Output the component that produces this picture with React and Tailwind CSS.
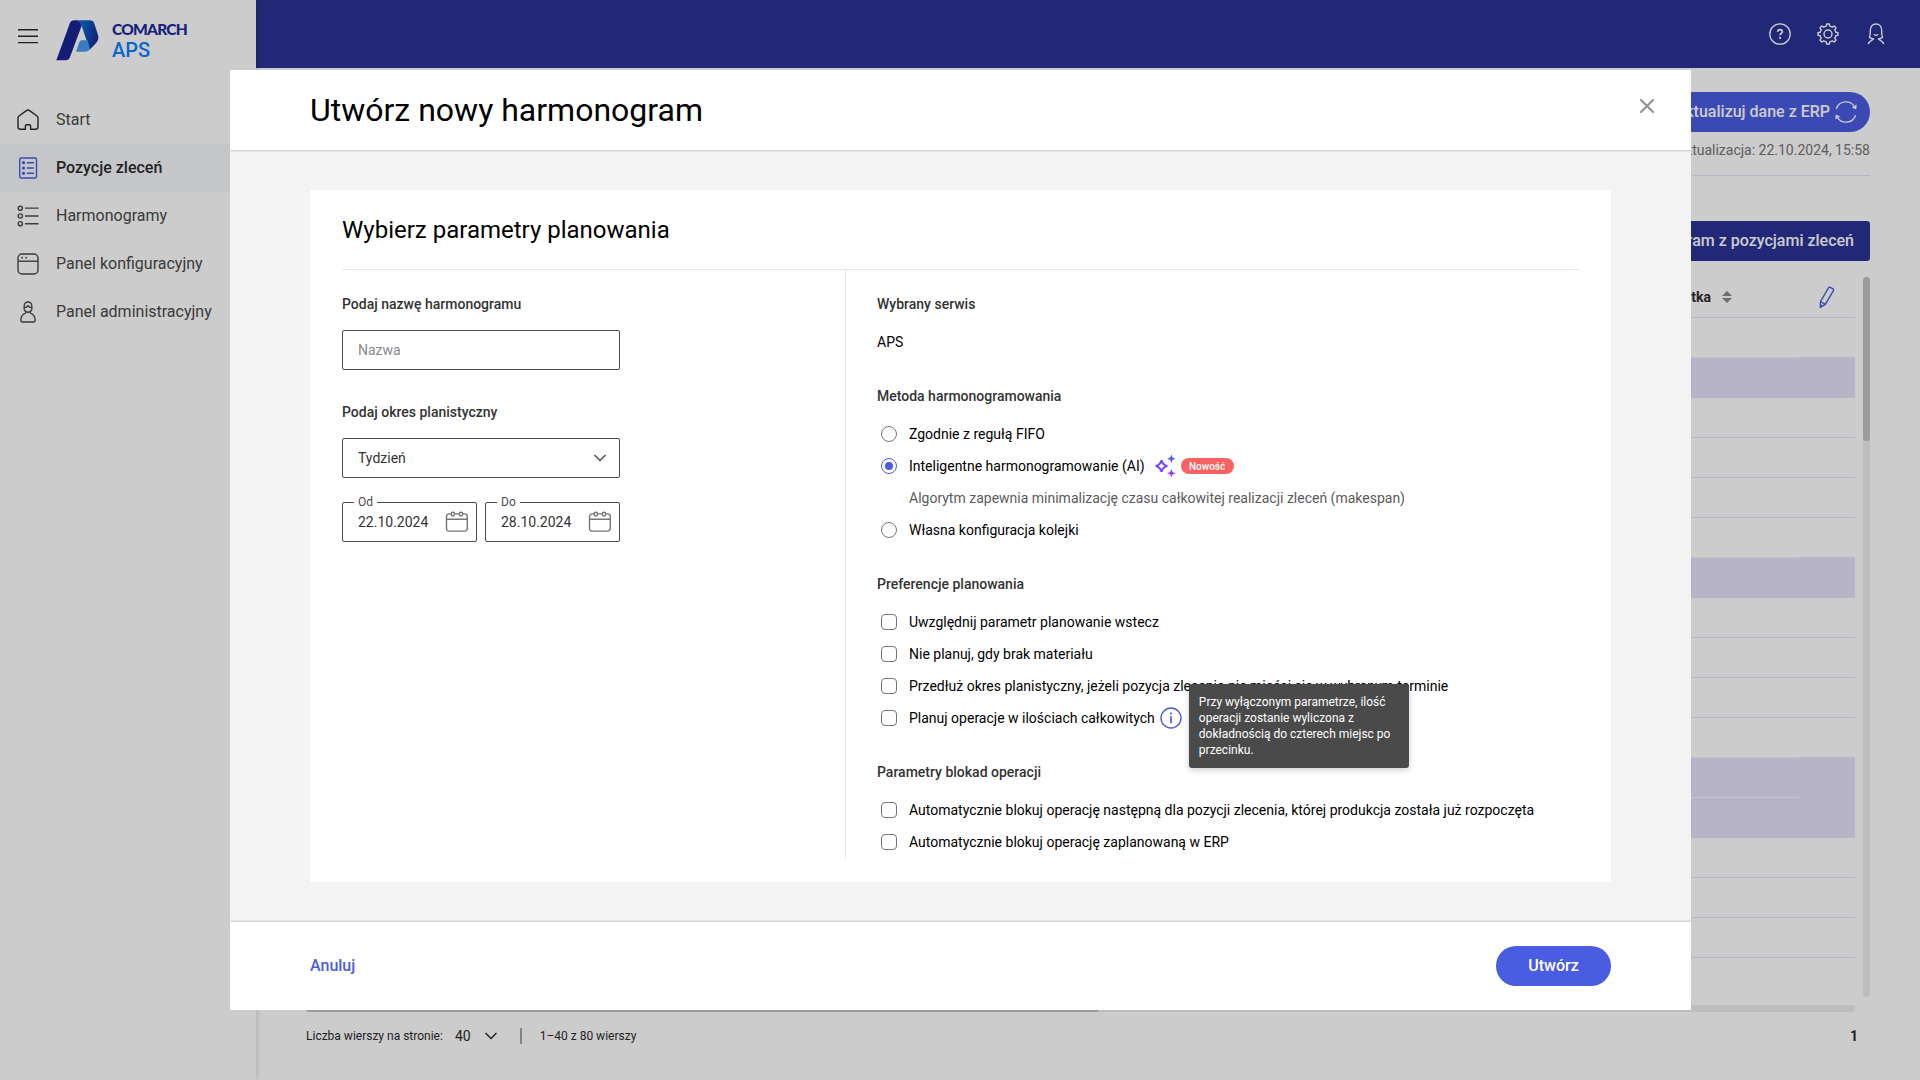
import React, { useState } from 'react';

const HomeIcon = () => (
  <svg width="24" height="24" viewBox="0 0 24 24" fill="none" stroke="#2b2b2b" strokeWidth="1.4" strokeLinejoin="round">
    <path d="M9.4 21.3H4.6A2.6 2.6 0 0 1 2 18.7V10a2.6 2.6 0 0 1 1-2l7.4-5.4a2.7 2.7 0 0 1 3.2 0L21 8a2.6 2.6 0 0 1 1 2v8.7a2.6 2.6 0 0 1-2.6 2.6h-4.8v-3.6a1 1 0 0 0-1-1h-3.2a1 1 0 0 0-1 1z" />
  </svg>
);

const OrdersIcon = () => (
  <svg width="24" height="24" viewBox="0 0 24 24" fill="none" stroke="#4a5ce2" strokeWidth="1.4">
    <rect x="3.7" y="2" width="16.8" height="20" rx="1.6" />
    <path d="M10.8 6.7H18M10.8 12H18M10.8 17.3H18" />
    <g fill="#4a5ce2" stroke="none">
      <circle cx="7.5" cy="6.7" r="1.6" />
      <circle cx="7.5" cy="12" r="1.6" />
      <circle cx="7.5" cy="17.3" r="1.6" />
    </g>
  </svg>
);

const ListIcon = () => (
  <svg width="24" height="24" viewBox="0 0 24 24" fill="none" stroke="#4a4a4a" strokeWidth="1.4">
    <circle cx="4.3" cy="4.3" r="2.1" />
    <circle cx="4.3" cy="12" r="2.1" />
    <circle cx="4.3" cy="19.7" r="2.1" />
    <path d="M9 4.1h13.5M9 12h13.5M9 19.8h13.5" />
  </svg>
);

const PanelIcon = () => (
  <svg width="24" height="24" viewBox="0 0 24 24" fill="none" stroke="#4a4a4a" strokeWidth="1.4">
    <rect x="2" y="2" width="20" height="20" rx="4" />
    <path d="M2 9.2h20" />
    <g fill="#4a4a4a" stroke="none">
      <circle cx="6.1" cy="5.7" r="0.9" />
      <circle cx="10.2" cy="5.7" r="0.9" />
    </g>
  </svg>
);

const AdminIcon = () => (
  <svg width="24" height="24" viewBox="0 0 24 24" fill="none" stroke="#4a4a4a" strokeWidth="1.4" strokeLinejoin="round">
    <path d="M8.2 9.4V5.8a3.8 3.8 0 0 1 7.6 0v3.6c0 .9-.7 1.4-1.5 2-1.3 1-3.3 1-4.6 0-.8-.6-1.5-1.1-1.5-2z" />
    <path d="M8.4 7.6c2.3 0 3-.8 3.6-2 .6 1.2 1.3 2 3.6 2" />
    <path d="M9.8 11.8v1.1c-3 1.1-4.6 3.3-4.9 6.8-.1 1.5.3 2.3 1.6 2.3h11c1.3 0 1.7-.8 1.6-2.3-.3-3.5-1.9-5.7-4.9-6.8v-1.1" />
  </svg>
);

const Logo = () => (
  <svg width="43" height="41" viewBox="169 59 129 123">
    <defs>
      <linearGradient id="logoRight" x1="0" y1="0" x2="1" y2="0.35">
        <stop offset="0.1" stopColor="#0a7be8" />
        <stop offset="0.5" stopColor="#0a5cc0" />
        <stop offset="1" stopColor="#16309a" />
      </linearGradient>
    </defs>
    <path d="M222 60h47q12 0 15 10l11 34q4 14-5 23l-20 21-24-72q-6-14-24-16z" fill="url(#logoRight)" />
    <path d="M170 180l40-110q4-10 14-10 16 0 22 16l-35 94q-4 10-13 10z" fill="#192593" />
    <path d="M229 154l10-29q2-5 7-5h18l7 27q-6 7-13 7z" fill="#4a9cf0" />
  </svg>
);

const HelpIcon = () => (
  <svg width="24" height="24" viewBox="0 0 24 24" fill="none" stroke="#fff" strokeWidth="1.3">
    <circle cx="12" cy="12" r="10.2" />
    <path d="M9.7 9.8c0-1.4 1-2.1 2.3-2.1s2.3.8 2.3 2c0 1.7-2.2 1.7-2.2 3.5" strokeWidth="1.8" />
    <circle cx="12.1" cy="15.9" r="1.1" fill="#fff" stroke="none" />
  </svg>
);

const GearIcon = () => (
  <svg width="24" height="24" viewBox="0 0 24 24" fill="none" stroke="#fff" strokeWidth="1.4" strokeLinejoin="round">
    <circle cx="12" cy="12" r="4" />
    <path d="M10.2 4.2 10.7 2h2.6l.5 2.2 2.5 1 1.9-1.2 1.8 1.8-1.2 1.9 1 2.5 2.2.5v2.6l-2.2.5-1 2.5 1.2 1.9-1.8 1.8-1.9-1.2-2.5 1-.5 2.2h-2.6l-.5-2.2-2.5-1-1.9 1.2L4 18.2l1.2-1.9-1-2.5-2.2-.5v-2.6l2.2-.5 1-2.5L4 5.8 5.8 4l1.9 1.2z" />
  </svg>
);

const UserIcon = () => (
  <svg width="24" height="24" viewBox="0 0 24 24" fill="none" stroke="#fff" strokeWidth="1.4" strokeLinejoin="round">
    <path d="M4.3 22c.4-1.6 1.8-2.6 3.6-3.8l1.7-1.2c-2.4-.5-3.9-1.2-4.2-2 1.2-1.600.9-3.500.9-6.700 0-3.800 2.400-6.300 5.700-6.300s5.700 2.500 5.700 6.300c0 3.200-.3 5.100.9 6.700-.3.8-1.800 1.500-4.200 2l1.700 1.200c1.800 1.200 3.200 2.200 3.600 3.800" />
    <path d="M9.9 12.2c.6 1.3 3.6 1.3 4.2 0" />
  </svg>
);

const RefreshIcon = () => (
  <svg width="24" height="24" viewBox="0 0 24 24" fill="none" stroke="#fff" strokeWidth="1.4">
    <path d="M2.4 8.700A10 10 0 0 1 20.800 7.300M21.600 15.300A10 10 0 0 1 3.200 16.700" />
    <path d="M17.800 7.600l4.400 1.800.5-4.800zM6.200 16.400l-4.400-1.800-.5 4.800z" fill="#fff" stroke="none" />
  </svg>
);

const PencilIcon = () => (
  <svg width="24" height="24" viewBox="0 0 24 24" fill="none" stroke="#4a5ce2" strokeWidth="1.4" strokeLinejoin="round">
    <path d="M5.3 22.3l.2-5.8L13.5 2.800a1.300 1.300 0 0 1 1.800-.4l2.700 1.500a1.300 1.300 0 0 1 .4 1.800l-8.100 13.700z" />
    <path d="M5.5 16.500l4.800 2.900M5.400 19.800l1.900 1.200" />
  </svg>
);

const CalendarIcon = () => (
  <svg width="24" height="24" viewBox="0 0 24 24" fill="none" stroke="#757575" strokeWidth="1.4">
    <path d="M6.2 3.9H4a2.5 2.5 0 0 0-2.5 2.5v12.2A2.5 2.5 0 0 0 4 21.100h15.800a2.500 2.500 0 0 0 2.500-2.500V6.400a2.500 2.500 0 0 0-2.500-2.500h-2.200M9.400 3.900h5M1.500 9.200h20.800" />
    <rect x="6.2" y="2.2" width="3.2" height="3.8" rx="1.4" />
    <rect x="14.4" y="2.2" width="3.2" height="3.8" rx="1.4" />
  </svg>
);

const Chevron = ({ color }) => (
  <svg width="12" height="8" viewBox="0 0 12 8" fill="none" stroke={color} strokeWidth="1.5">
    <path d="M0.5 1l5.5 5.5L11.5 1" />
  </svg>
);

const SparkleIcon = () => (
  <svg width="24" height="24" viewBox="0 0 24 24">
    <defs>
      <linearGradient id="sparkle" x1="0" y1="0" x2="0" y2="24" gradientUnits="userSpaceOnUse">
        <stop offset="0.1" stopColor="#4a5ce2" />
        <stop offset="0.9" stopColor="#a033ff" />
      </linearGradient>
    </defs>
    <path d="M8.5 6.200c.8 3.700 2.100 5 5.800 5.800-3.700.8-5 2.100-5.800 5.800-.8-3.700-2.100-5-5.800-5.800 3.700-.8 5-2.100 5.800-5.800z" fill="none" stroke="url(#sparkle)" strokeWidth="2" />
    <path d="M18.400 1c.5 2.500 1.200 3.200 3.700 3.700-2.500.5-3.200 1.200-3.700 3.700-.5-2.500-1.200-3.200-3.700-3.700 2.500-.5 3.200-1.200 3.700-3.700zM18.400 15.600c.5 2.500 1.200 3.200 3.700 3.700-2.500.5-3.200 1.200-3.700 3.700-.5-2.500-1.200-3.200-3.700-3.700 2.500-.5 3.200-1.200 3.700-3.700z" fill="url(#sparkle)" stroke="url(#sparkle)" strokeWidth="0.5" />
  </svg>
);

const InfoIcon = () => (
  <svg width="24" height="24" viewBox="0 0 24 24" fill="none" stroke="#4a5ce2" strokeWidth="1.4">
    <circle cx="12" cy="12" r="10" />
    <path d="M12 10.2v7" strokeWidth="1.7" />
    <circle cx="12" cy="7.500" r="1.1" fill="#4a5ce2" stroke="none" />
  </svg>
);

const menu = [
  { label: 'Start', Icon: HomeIcon },
  { label: 'Pozycje zleceń', Icon: OrdersIcon, active: true },
  { label: 'Harmonogramy', Icon: ListIcon },
  { label: 'Panel konfiguracyjny', Icon: PanelIcon },
  { label: 'Panel administracyjny', Icon: AdminIcon },
];

// Rows of the order table, true = highlighted
const rows = [false, true, false, false, false, false, true, false, false, false, false, true, true, false, false, false, false];

const Sidebar = () => (
  <aside className="relative z-10 flex w-64 shrink-0 flex-col bg-white shadow-[0_0_6px_rgba(0,0,0,0.2)]">
    <div className="flex h-24 items-start pl-[18px] pt-5">
      <svg className="mt-[9px]" width="20" height="15" viewBox="0 0 20 15" stroke="#2b2b2b" strokeWidth="1.4">
        <path d="M0 .8h20M0 7.2h20M0 13.6h20" />
      </svg>
      <div className="ml-[18px]">
        <Logo />
      </div>
      <div className="ml-[13px] mt-px flex flex-col">
        <span className="font-[Lato,sans-serif] text-[15.5px] leading-[16px] font-black tracking-[-0.75px] text-[#1b2a9c]">COMARCH</span>
        <span className="mt-0.5 text-xl leading-[22px] font-medium text-[#0b80ff]">APS</span>
      </div>
    </div>
    <nav>
      {menu.map(({ label, Icon, active }) => (
        <div key={label} className={`flex h-12 items-center gap-4 pl-4 ${active ? 'bg-[#f7f8fb] font-medium text-[#2b2b2b]' : 'text-[#4a4a4a]'}`}>
          <Icon />
          <span className="text-base">{label}</span>
        </div>
      ))}
    </nav>
  </aside>
);

const TableRow = ({ marked, joined }) => (
  <div className="flex h-10">
    <div className={`flex-1 border-b ${marked ? 'bg-[#e5e2fa]' : ''} ${joined ? 'border-[#f5f4fd]' : 'border-[#e5e2fa]'}`} />
    <div className={`w-14 border-b border-[#e5e2fa] ${marked ? 'bg-[#e5e2fa]' : ''}`} />
  </div>
);

const OrdersPage = () => (
  <main className="flex flex-1 flex-col">
    <header className="flex h-[68px] items-center justify-end gap-6 bg-[#293395] pr-8">
      <HelpIcon />
      <GearIcon />
      <UserIcon />
    </header>
    <div className="flex flex-1 flex-col pl-[50px] pr-[50px] pt-6">
      <div className="flex flex-col items-end border-b border-[#e5e2fa] pb-[15px]">
        <button className="flex h-10 items-center gap-1 rounded-full bg-[#4a5ce2] pl-6 pr-3 text-base font-medium text-white">
          Zaktualizuj dane z ERP
          <RefreshIcon />
        </button>
        <span className="mt-2 text-sm leading-5 text-[#757575]">Ostatnia aktualizacja: 22.10.2024, 15:58</span>
      </div>
      <button className="mt-[45px] h-10 self-end rounded-[3px] bg-[#293395] px-4 text-base font-medium text-white">
        Utwórz harmonogram z pozycjami zleceń
      </button>
      <div className="mt-4 flex h-[720px] justify-between">
        <div className="w-[1549px]">
          <div className="flex h-[41px] items-center justify-end border-b border-[#e5e2fa] pr-4">
            <span className="text-sm font-bold text-[#2b2b2b]">Jednostka</span>
            <svg className="ml-[11px]" width="10" height="12" viewBox="0 0 10 12" fill="#8a8a8a">
              <path d="M0 5l5-5 5 5zM0 7l5 5 5-5z" />
            </svg>
            <span className="ml-[83px]">
              <PencilIcon />
            </span>
          </div>
          {rows.slice(0, 16).map((marked, i) => (
            <TableRow key={i} marked={marked} joined={rows[i + 1]} />
          ))}
        </div>
        <div className="w-[7px] rounded-full bg-[#ededed]">
          <div className="h-[164px] rounded-full bg-[#c2c2c2]" />
        </div>
      </div>
      <div className="mt-2 h-[7px] w-[1549px] rounded-full bg-[#ededed]">
        <div className="h-full w-[793px] rounded-full bg-[#c2c2c2]" />
      </div>
      <div className="mt-3 flex h-6 items-center pr-3 text-xs text-[#2b2b2b]">
        <span>Liczba wierszy na stronie:</span>
        <span className="ml-3 mr-[14px] text-sm">40</span>
        <Chevron color="#2b2b2b" />
        <span className="ml-[23px] mr-[18px] h-4 w-0.5 bg-[#a5a5a5]" />
        <span>1–40 z 80 wierszy</span>
        <span className="ml-auto text-sm font-bold">1</span>
      </div>
    </div>
  </main>
);

const SectionTitle = ({ children }) => (
  <h3 className="flex h-6 items-center text-sm font-medium text-[#333]">{children}</h3>
);

const Radio = ({ label, checked, onChange, children }) => (
  <div className="flex h-8 items-center pl-1">
    <button
      onClick={onChange}
      className={`flex h-4 w-4 items-center justify-center rounded-full border ${checked ? 'border-[#4a5ce2]' : 'border-[#757575]'}`}
    >
      {checked && <span className="h-2 w-2 rounded-full bg-[#4a5ce2]" />}
    </button>
    <span className="ml-3 text-sm whitespace-nowrap text-black">{label}</span>
    {children}
  </div>
);

const Checkbox = ({ label, checked, onChange, children }) => (
  <div className="flex h-8 items-center pl-1">
    <button
      onClick={onChange}
      className={`h-4 w-4 rounded-[4px] border border-[#757575] ${checked ? 'bg-[#4a5ce2]' : 'bg-white'}`}
    />
    <span className="ml-3 text-sm whitespace-nowrap text-black">{label}</span>
    {children}
  </div>
);

const DateField = ({ label, value }) => (
  <div className="relative flex h-10 w-[135px] items-center justify-between rounded-[2px] border border-[#4a4a4a] pl-[15px] pr-[7px]">
    <span className="absolute -top-[9px] left-[11px] bg-white px-1 text-xs leading-4 text-[#4a4a4a]">{label}</span>
    <span className="text-sm text-[#333]">{value}</span>
    <CalendarIcon />
  </div>
);

const preferences = [
  'Uwzględnij parametr planowanie wstecz',
  'Nie planuj, gdy brak materiału',
  'Przedłuż okres planistyczny, jeżeli pozycja zlecenia nie mieści się w wybranym terminie',
  'Planuj operacje w ilościach całkowitych',
];

const locks = [
  'Automatycznie blokuj operację następną dla pozycji zlecenia, której produkcja została już rozpoczęta',
  'Automatycznie blokuj operację zaplanowaną w ERP',
];

const NewScheduleModal = () => {
  const [method, setMethod] = useState('ai');
  const [selected, setSelected] = useState([]);

  const toggle = (name) => {
    setSelected(selected.includes(name) ? selected.filter((n) => n !== name) : [...selected, name]);
  };

  return (
    <div className="flex h-[940px] w-[1461px] flex-col overflow-hidden bg-[#f3f3f3]">
      <div className="flex h-20 shrink-0 items-center justify-between bg-white pl-20 pr-[37px] shadow-[0_1px_2px_rgba(0,0,0,0.18)]">
        <h1 className="text-[32px] leading-10 text-black">Utwórz nowy harmonogram</h1>
        <svg className="-mt-2" width="14" height="14" viewBox="0 0 14 14" stroke="#8f8f8f" strokeWidth="2" strokeLinecap="round">
          <path d="M1 1l12 12M13 1L1 13" />
        </svg>
      </div>

      <div className="flex-1 px-20 pt-10">
        <div className="h-[692px] w-[1301px] bg-white px-8">
          <h2 className="flex h-20 items-center border-b border-[#e5e2fa] text-2xl text-black">Wybierz parametry planowania</h2>
          <div className="flex h-[588px]">
            <div className="w-[504px] border-r border-[#e5e2fa] pt-[22px]">
              <SectionTitle>Podaj nazwę harmonogramu</SectionTitle>
              <input
                placeholder="Nazwa"
                className="mt-3.5 block h-10 w-[278px] rounded-[2px] border border-[#4a4a4a] px-[15px] text-sm placeholder:text-[#8a8a8a]"
              />
              <div className="mt-[30px]">
                <SectionTitle>Podaj okres planistyczny</SectionTitle>
              </div>
              <div className="mt-3.5 flex h-10 w-[278px] items-center justify-between rounded-[2px] border border-[#4a4a4a] pl-[15px] pr-[13px] text-sm text-[#333]">
                Tydzień
                <Chevron color="#4a4a4a" />
              </div>
              <div className="mt-6 flex gap-2">
                <DateField label="Od" value="22.10.2024" />
                <DateField label="Do" value="28.10.2024" />
              </div>
            </div>

            <div className="flex-1 pl-[31px] pt-[22px]">
              <SectionTitle>Wybrany serwis</SectionTitle>
              <p className="mt-3.5 text-sm leading-6 text-black">APS</p>

              <div className="mb-2.5 mt-[30px]">
                <SectionTitle>Metoda harmonogramowania</SectionTitle>
              </div>
              <Radio label="Zgodnie z regułą FIFO" checked={method === 'fifo'} onChange={() => setMethod('fifo')} />
              <Radio label="Inteligentne harmonogramowanie (AI)" checked={method === 'ai'} onChange={() => setMethod('ai')}>
                <span className="ml-2">
                  <SparkleIcon />
                </span>
                <span className="ml-1 flex h-4 w-[53px] items-center justify-center rounded-full bg-[#fa6161] text-[10px] font-medium text-white">Nowość</span>
              </Radio>
              <p className="pl-8 text-sm leading-8 text-[#5a5a5a]">Algorytm zapewnia minimalizację czasu całkowitej realizacji zleceń (makespan)</p>
              <Radio label="Własna konfiguracja kolejki" checked={method === 'custom'} onChange={() => setMethod('custom')} />

              <div className="mb-2.5 mt-[26px]">
                <SectionTitle>Preferencje planowania</SectionTitle>
              </div>
              {preferences.map((name, i) => (
                <Checkbox key={name} label={name} checked={selected.includes(name)} onChange={() => toggle(name)}>
                  {i === 3 && (
                    <span className="relative ml-1">
                      <InfoIcon />
                      <span className="absolute -top-[22px] left-[30px] z-10 h-[84px] w-[220px] rounded-[3px] bg-[#4a4a4a] px-2.5 py-2.5 text-xs leading-4 text-white shadow-[0_2px_6px_rgba(0,0,0,0.2)]">
                        Przy wyłączonym parametrze, ilość operacji zostanie wyliczona z dokładnością do czterech miejsc po przecinku.
                      </span>
                    </span>
                  )}
                </Checkbox>
              ))}

              <div className="mb-2.5 mt-[26px]">
                <SectionTitle>Parametry blokad operacji</SectionTitle>
              </div>
              {locks.map((name) => (
                <Checkbox key={name} label={name} checked={selected.includes(name)} onChange={() => toggle(name)} />
              ))}
            </div>
          </div>
        </div>
      </div>

      <div className="flex h-[88px] shrink-0 items-center justify-between bg-white px-20 text-base font-medium shadow-[0_-1px_2px_rgba(0,0,0,0.18)]">
        <button className="text-[#4a5ce2]">Anuluj</button>
        <button className="h-10 w-[115px] rounded-full bg-[#4a5ce2] text-white">Utwórz</button>
      </div>
    </div>
  );
};

function App() {
  return (
    <div className="relative flex h-[1080px] w-[1920px] overflow-hidden bg-white font-[Roboto,sans-serif]">
      <Sidebar />
      <OrdersPage />
      <div className="absolute inset-0 z-20 bg-black/20 pl-[230px] pt-[70px]">
        <NewScheduleModal />
      </div>
    </div>
  );
}

export default App;
